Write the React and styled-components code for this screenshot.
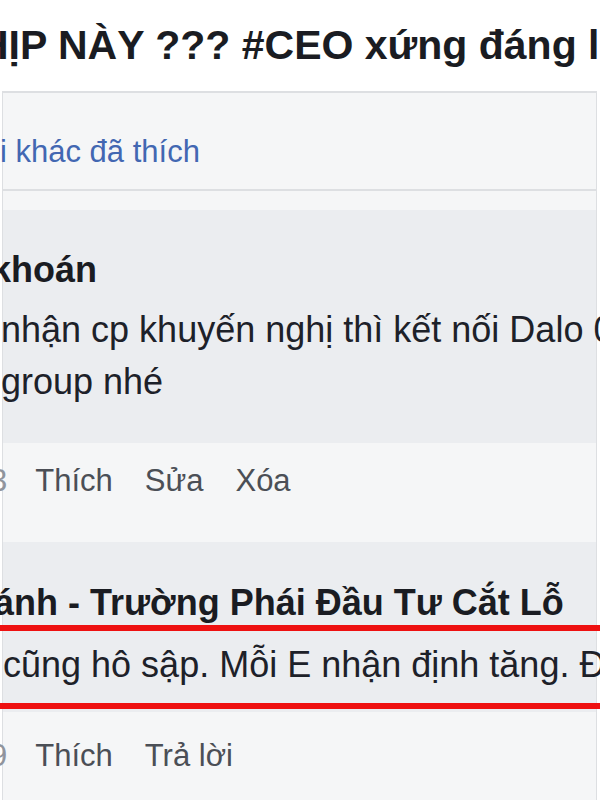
import React from "react";
import styled, { createGlobalStyle } from "styled-components";

const GlobalStyle = createGlobalStyle`
  body {
    margin: 0;
    background: #ffffff;
    font-family: "Liberation Sans", Arial, Helvetica, sans-serif;
    overflow: hidden;
  }
`;

const comments = [
  {
    id: 1,
    author: "khoán",
    authorCut: -12,
    lines: [
      { text: "nhận cp khuyến nghị thì kết nối Dalo 0", cut: -2 },
      { text: "group nhé", cut: -2 },
    ],
    meta: "3",
    actions: ["Thích", "Sửa", "Xóa"],
    padTop: 34,
    padBottom: 35,
    actionsTop: 12,
    actionsBottom: 35,
  },
  {
    id: 2,
    author: "ánh - Trường Phái Đầu Tư Cắt Lỗ",
    authorCut: -9,
    lines: [{ text: "cũng hô sập. Mỗi E nhận định tăng. Đ", cut: 0 }],
    marked: true,
    meta: "9",
    actions: ["Thích", "Trả lời"],
    padTop: 35,
    padBottom: 3,
    actionsTop: 18,
    actionsBottom: 0,
  },
];

const App = () => {
  return (
    <>
      <GlobalStyle />
      <Page>
        <PostTitle>HỊP NÀY ??? #CEO xứng đáng l</PostTitle>
        <Panel>
          <LikesBar>
            <LikesLink>i khác đã thích</LikesLink>
          </LikesBar>
          <Thread>
            {comments.map((c) => (
              <div key={c.id}>
                <Bubble $top={c.padTop} $bottom={c.padBottom}>
                  <Author $cut={c.authorCut}>{c.author}</Author>
                  {c.marked ? (
                    <Marked>
                      {c.lines.map((l) => (
                        <TextLine key={l.text} $cut={l.cut}>
                          {l.text}
                        </TextLine>
                      ))}
                    </Marked>
                  ) : (
                    <TextBlock>
                      {c.lines.map((l) => (
                        <TextLine key={l.text} $cut={l.cut}>
                          {l.text}
                        </TextLine>
                      ))}
                    </TextBlock>
                  )}
                </Bubble>
                <Actions $top={c.actionsTop} $bottom={c.actionsBottom}>
                  <Meta>{c.meta}</Meta>
                  {c.actions.map((a) => (
                    <ActionLink key={a}>{a}</ActionLink>
                  ))}
                </Actions>
              </div>
            ))}
          </Thread>
        </Panel>
      </Page>
    </>
  );
};

const Page = styled.div`
  width: 600px;
  height: 800px;
  overflow: hidden;
  background: #ffffff;
`;

const PostTitle = styled.h1`
  margin: 0 0 0 -21px;
  height: 91px;
  display: flex;
  align-items: center;
  font-size: 41px;
  font-weight: 700;
  color: #1a1c22;
  white-space: nowrap;
`;

const Panel = styled.div`
  margin-left: 2px;
  width: 593px;
  height: 709px;
  background: #f5f6f7;
  border-top: 2px solid #dddfe2;
  border-left: 1px solid #dddfe2;
  border-right: 1px solid #dddfe2;
`;

const LikesBar = styled.div`
  height: 98px;
  box-sizing: border-box;
  display: flex;
  align-items: center;
  padding-top: 22px;
  border-bottom: 2px solid #dddfe2;
`;

const LikesLink = styled.span`
  margin-left: -3px;
  font-size: 31px;
  color: #4267b2;
  white-space: nowrap;
`;

const Thread = styled.div`
  padding-top: 19px;
`;

const Bubble = styled.div`
  background: #ebedf0;
  padding: ${(p) => p.$top}px 0 ${(p) => p.$bottom}px;
`;

const Author = styled.div`
  margin-left: ${(p) => p.$cut}px;
  font-size: 36px;
  font-weight: 700;
  line-height: 52px;
  color: #1a1c22;
  white-space: nowrap;
`;

const TextBlock = styled.div`
  margin-top: 8px;
`;

const Marked = styled.div`
  margin: -4px -20px 0;
  padding: 8px 20px 12px;
  border-top: 6px solid #ee1111;
  border-bottom: 6px solid #ee1111;
`;

const TextLine = styled.div`
  margin-left: ${(p) => p.$cut}px;
  font-size: 36px;
  line-height: 52px;
  color: #1d2129;
  white-space: nowrap;
`;

const Actions = styled.div`
  display: flex;
  align-items: center;
  gap: 32px;
  margin-left: -13px;
  padding: ${(p) => p.$top}px 0 ${(p) => p.$bottom}px;
  font-size: 31px;
  line-height: 52px;
  white-space: nowrap;
`;

const Meta = styled.span`
  color: #90949c;
  margin-right: -4px;
`;

const ActionLink = styled.span`
  color: #4b4f56;
`;

export default App;
